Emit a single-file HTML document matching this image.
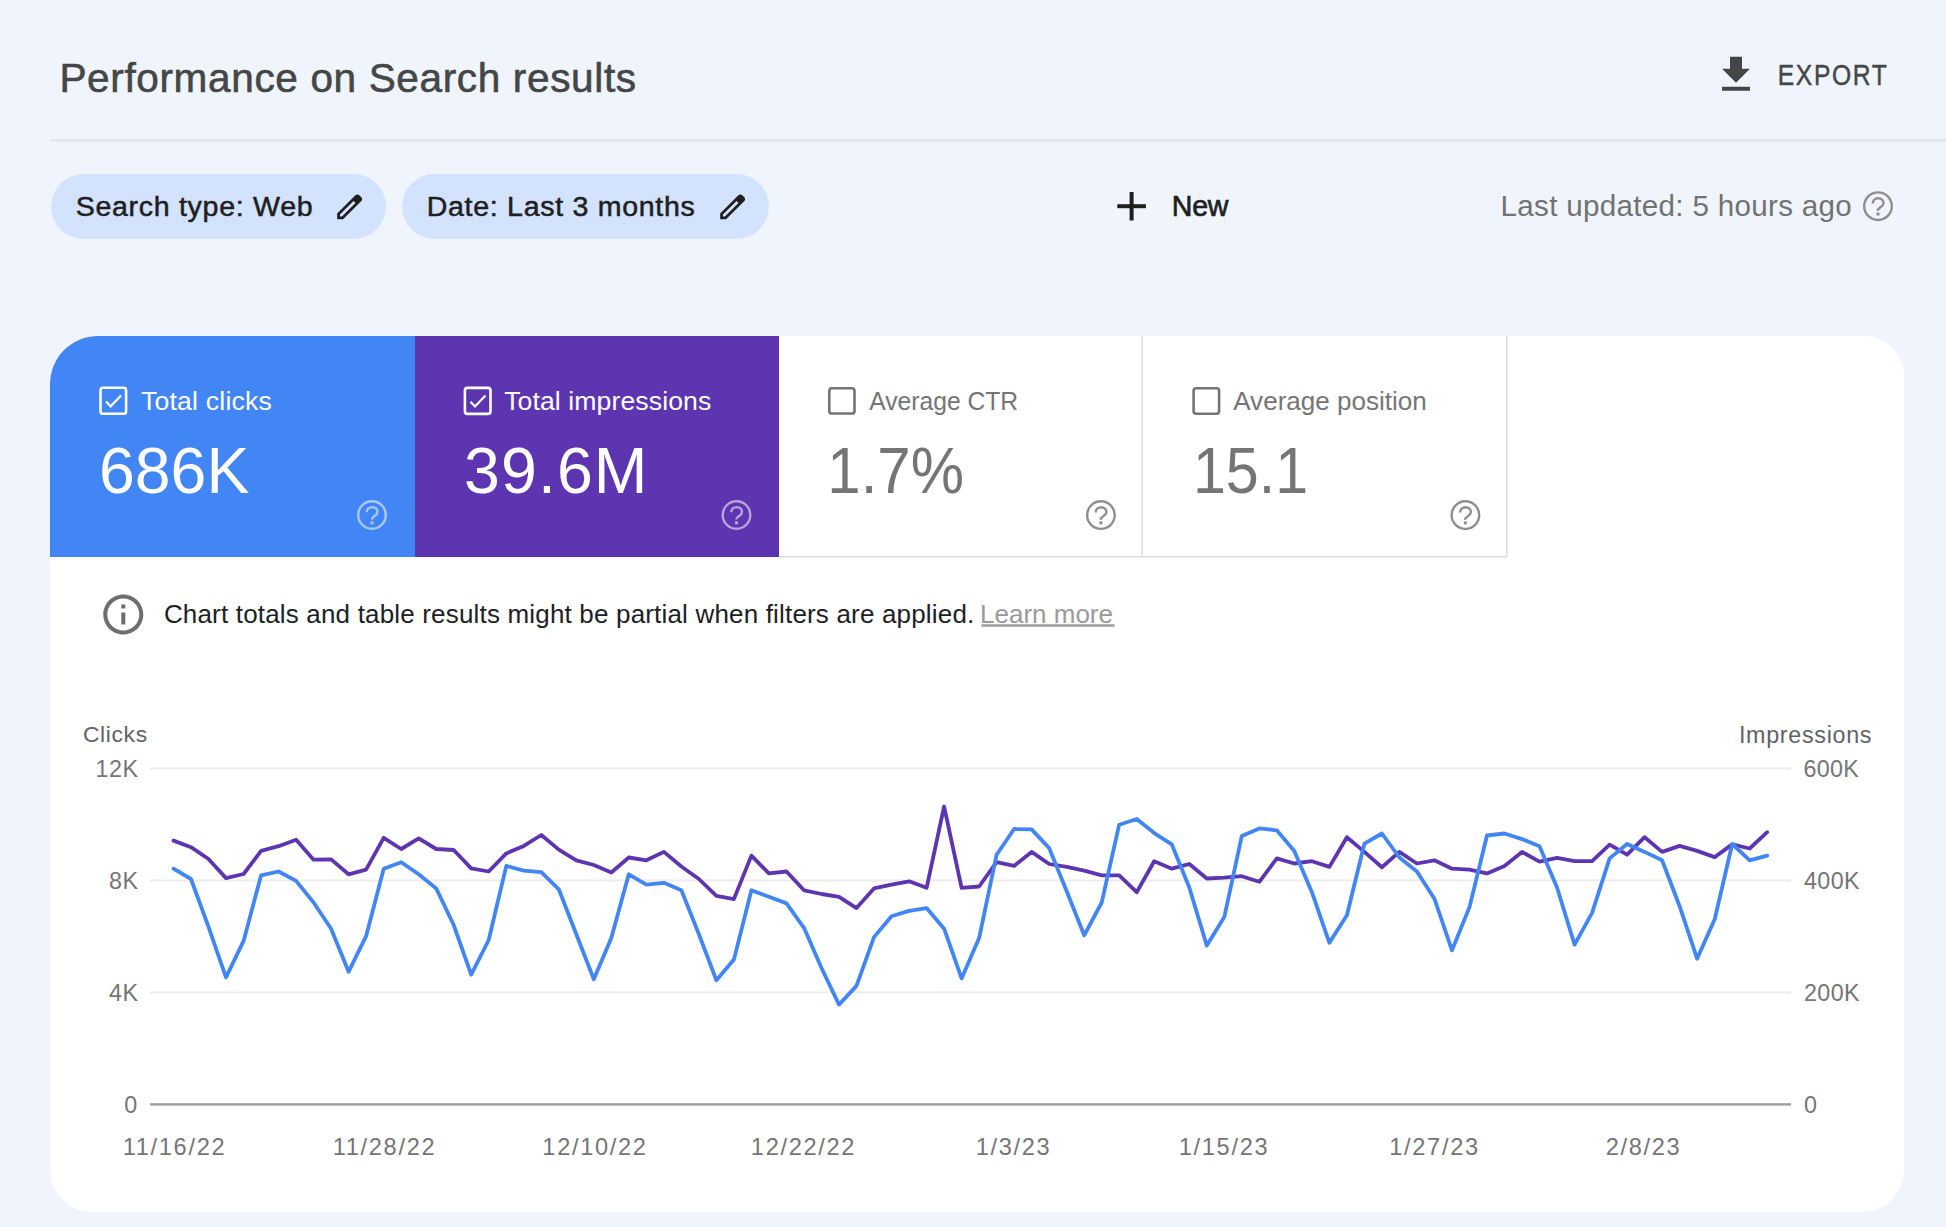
<!DOCTYPE html>
<html><head><meta charset="utf-8">
<style>
html,body{margin:0;padding:0;width:1946px;height:1227px;overflow:hidden;background:#f0f5fd;}
svg{display:block;position:absolute;left:0;top:0;}
text{font-family:"Liberation Sans",sans-serif;}
</style></head>
<body>
<svg width="1946" height="1227" viewBox="0 0 1946 1227">
  <!-- header -->
  <text x="59.4" y="92.4" font-size="40.6" letter-spacing="0.62" fill="#444746" stroke="#444746" stroke-width="0.6">Performance on Search results</text>
  <!-- export -->
  <g transform="translate(1712,50.7) scale(2)" fill="#444746"><path d="M19 9h-4V3H9v6H5l7 7 7-7zM5 18v2h14v-2H5z"/></g>
  <text transform="translate(1777.7,84.5) scale(0.85,1)" font-size="29" letter-spacing="1.95" fill="#444746" stroke="#444746" stroke-width="0.45">EXPORT</text>
  <rect x="50" y="139.5" width="1896" height="2" fill="#e1e2e3"/>

  <!-- chips -->
  <rect x="51" y="174" width="335" height="65" rx="32.5" fill="#d3e3fd"/>
  <text transform="translate(75.7,216) scale(1.07,1)" font-size="26.7" letter-spacing="0.65" fill="#1f1f1f" stroke="#1f1f1f" stroke-width="0.5">Search type: Web</text>
  <g transform="translate(333.0,223.5) scale(0.0347)" fill="#1f1f1f"><path d="M200-200h57l391-391-57-57-391 391v57Zm-80 80v-170l525-525q12-11 26.5-17t30.5-6q16 0 31 6t26 18l55 56q12 11 17.5 26t5.5 30q0 16-5.5 30.5T817-647L290-120H120Zm640-584-56-56 56 56Zm-141 85-28-29 57 57-29-28Z"/></g>

  <rect x="402" y="174" width="367" height="65" rx="32.5" fill="#d3e3fd"/>
  <text transform="translate(426.7,216) scale(1.07,1)" font-size="26.7" letter-spacing="0.65" fill="#1f1f1f" stroke="#1f1f1f" stroke-width="0.5">Date: Last 3 months</text>
  <g transform="translate(716.0,223.5) scale(0.0347)" fill="#1f1f1f"><path d="M200-200h57l391-391-57-57-391 391v57Zm-80 80v-170l525-525q12-11 26.5-17t30.5-6q16 0 31 6t26 18l55 56q12 11 17.5 26t5.5 30q0 16-5.5 30.5T817-647L290-120H120Zm640-584-56-56 56 56Zm-141 85-28-29 57 57-29-28Z"/></g>

  <!-- new -->
  <rect x="1117.3" y="204.2" width="28.6" height="4" fill="#1f1f1f"/>
  <rect x="1129.6" y="192" width="4" height="28.5" fill="#1f1f1f"/>
  <text x="1171.8" y="216.1" font-size="28.6" letter-spacing="-0.3" fill="#1f1f1f" stroke="#1f1f1f" stroke-width="0.7">New</text>

  <!-- last updated -->
  <text x="1500.5" y="216.4" font-size="29.6" letter-spacing="0.31" fill="#727272">Last updated: 5 hours ago</text>
  <g transform="translate(1878.0,206.2)" fill="none" stroke="#8e8e8e" stroke-width="2.4"><circle r="13.8"/><path d="M-5.2,-2.7 C-5.2,-6 -2.7,-7.9 0.2,-7.9 C3.2,-7.9 5.5,-5.8 5.5,-3 C5.5,0.8 -0.3,1.2 -0.3,4.6"/><rect x="-1.5" y="6.3" width="3" height="3" fill="#8e8e8e" stroke="none"/></g>

  <!-- card -->
  <path d="M50,384 a48,48 0 0 1 48,-48 L1864,336 a40,40 0 0 1 40,40 L1904,1170 a42,42 0 0 1 -42,42 L92,1212 a42,42 0 0 1 -42,-42 Z" fill="#ffffff"/>

  <!-- tiles -->
  <path d="M50,384 a48,48 0 0 1 48,-48 L415,336 L415,557 L50,557 Z" fill="#4285f4"/>
  <rect x="415" y="336" width="364" height="221" fill="#5e35b1"/>
  <rect x="779" y="556" width="728" height="1.5" fill="#dadce0"/>
  <rect x="1141.3" y="336" width="1.5" height="221" fill="#dadce0"/>
  <rect x="1506" y="336" width="1.5" height="221" fill="#dadce0"/>

  <!-- tile 1 -->
  <rect x="100.5" y="387.8" width="25.6" height="26" rx="2.6" fill="none" stroke="#fff" stroke-width="2.6"/>
  <polyline points="106.1,401.6 110.6,406.3 121.1,395.5" fill="none" stroke="#fff" stroke-width="2.2"/>
  <text x="140.9" y="409.6" font-size="26.6" letter-spacing="0.22" fill="#fff">Total clicks</text>
  <text x="99" y="493.2" font-size="64.4" fill="#fff">686K</text>
  <g transform="translate(372.0,515.0)" fill="none" stroke="rgba(255,255,255,0.55)" stroke-width="2.4"><circle r="13.8"/><path d="M-5.2,-2.7 C-5.2,-6 -2.7,-7.9 0.2,-7.9 C3.2,-7.9 5.5,-5.8 5.5,-3 C5.5,0.8 -0.3,1.2 -0.3,4.6"/><rect x="-1.5" y="6.3" width="3" height="3" fill="rgba(255,255,255,0.55)" stroke="none"/></g>

  <!-- tile 2 -->
  <rect x="464.9" y="387.9" width="25.6" height="26" rx="2.6" fill="none" stroke="#fff" stroke-width="2.6"/>
  <polyline points="470.5,401.7 475,406.4 485.5,395.6" fill="none" stroke="#fff" stroke-width="2.2"/>
  <text x="504.2" y="409.6" font-size="26.6" letter-spacing="0.1" fill="#fff">Total impressions</text>
  <text x="464.1" y="493.2" font-size="64.4" letter-spacing="1.1" fill="#fff">39.6M</text>
  <g transform="translate(736.5,515.0)" fill="none" stroke="rgba(255,255,255,0.55)" stroke-width="2.4"><circle r="13.8"/><path d="M-5.2,-2.7 C-5.2,-6 -2.7,-7.9 0.2,-7.9 C3.2,-7.9 5.5,-5.8 5.5,-3 C5.5,0.8 -0.3,1.2 -0.3,4.6"/><rect x="-1.5" y="6.3" width="3" height="3" fill="rgba(255,255,255,0.55)" stroke="none"/></g>

  <!-- tile 3 -->
  <rect x="829.3" y="388.3" width="25.2" height="25.2" rx="2.6" fill="none" stroke="#757575" stroke-width="2.6"/>
  <text transform="translate(869.2,409.6) scale(0.9275,1)" font-size="26.6" fill="#757575">Average CTR</text>
  <text transform="translate(827.3,493.2) scale(0.932,1)" font-size="64.4" fill="#757575">1.7%</text>
  <g transform="translate(1100.9,515.1)" fill="none" stroke="#8f8f8f" stroke-width="2.4"><circle r="13.8"/><path d="M-5.2,-2.7 C-5.2,-6 -2.7,-7.9 0.2,-7.9 C3.2,-7.9 5.5,-5.8 5.5,-3 C5.5,0.8 -0.3,1.2 -0.3,4.6"/><rect x="-1.5" y="6.3" width="3" height="3" fill="#8f8f8f" stroke="none"/></g>

  <!-- tile 4 -->
  <rect x="1193.6" y="388.3" width="25.5" height="25.4" rx="2.6" fill="none" stroke="#757575" stroke-width="2.6"/>
  <text transform="translate(1233.2,409.6) scale(0.98,1)" font-size="26.6" fill="#757575">Average position</text>
  <text transform="translate(1192.9,493.2) scale(0.92,1)" font-size="64.4" fill="#757575">15.1</text>
  <g transform="translate(1465.4,515.1)" fill="none" stroke="#8f8f8f" stroke-width="2.4"><circle r="13.8"/><path d="M-5.2,-2.7 C-5.2,-6 -2.7,-7.9 0.2,-7.9 C3.2,-7.9 5.5,-5.8 5.5,-3 C5.5,0.8 -0.3,1.2 -0.3,4.6"/><rect x="-1.5" y="6.3" width="3" height="3" fill="#8f8f8f" stroke="none"/></g>

  <!-- info -->
  <g transform="translate(99.3,590.4) scale(2)" fill="#6e6e6e"><path d="M11 7h2v2h-2zm0 4h2v6h-2zm1-9C6.48 2 2 6.48 2 12s4.48 10 10 10 10-4.48 10-10S17.52 2 12 2zm0 18c-4.41 0-8-3.59-8-8s3.59-8 8-8 8 3.59 8 8-3.59 8-8 8z"/></g>
  <text x="163.9" y="623" font-size="26" letter-spacing="0.175" fill="#202124">Chart totals and table results might be partial when filters are applied.</text>
  <text x="980" y="623" font-size="26" fill="#9a9a9a">Learn more</text>
  <rect x="981.5" y="624.2" width="133" height="2.6" fill="#a0a0a0"/>

  <!-- chart -->
  <text x="82.9" y="742.2" font-size="22.9" letter-spacing="0.64" fill="#5f6368">Clicks</text>
  <text x="1738.9" y="742.5" font-size="23.3" letter-spacing="0.7" fill="#5f6368">Impressions</text>
  <g fill="#eeeeee">
    <rect x="150" y="767.5" width="1641" height="2"/>
    <rect x="150" y="879.5" width="1641" height="2"/>
    <rect x="150" y="991.5" width="1641" height="2"/>
  </g>
  <rect x="150" y="1103.2" width="1641" height="2.4" fill="#9e9e9e"/>
  <g font-size="23.3" fill="#757575" text-anchor="end" letter-spacing="0.5">
    <text x="138.5" y="776.5">12K</text>
    <text x="138.5" y="889.2">8K</text>
    <text x="138.5" y="1001.2">4K</text>
    <text x="137.8" y="1113">0</text>
  </g>
  <g font-size="23.3" fill="#757575" letter-spacing="0.37">
    <text x="1803.4" y="776.5">600K</text>
    <text x="1804" y="889.2">400K</text>
    <text x="1804" y="1001.2">200K</text>
    <text x="1804" y="1113">0</text>
  </g>
  <g font-size="23.6" fill="#757575" text-anchor="middle" letter-spacing="1.68">
    <text x="174.5" y="1154.8">11/16/22</text>
    <text x="384.5" y="1154.8">11/28/22</text>
    <text x="595" y="1154.8">12/10/22</text>
    <text x="803.5" y="1154.8">12/22/22</text>
    <text x="1013.5" y="1154.8">1/3/23</text>
    <text x="1224" y="1154.8">1/15/23</text>
    <text x="1434.5" y="1154.8">1/27/23</text>
    <text x="1643.5" y="1154.8">2/8/23</text>
  </g>
  <polyline points="173.5,840.6 191.0,847.2 208.5,859.0 226.0,878.1 243.6,874.0 261.1,850.9 278.6,846.2 296.1,839.7 313.6,859.7 331.1,859.4 348.6,874.3 366.1,869.7 383.7,837.8 401.2,849.0 418.7,838.4 436.2,849.0 453.7,850.0 471.2,868.4 488.7,871.5 506.3,853.4 523.8,845.9 541.3,835.0 558.8,849.6 576.3,860.3 593.8,865.0 611.3,872.5 628.8,857.5 646.4,860.3 663.9,851.9 681.4,866.5 698.9,879.0 716.4,895.9 733.9,899.1 751.4,855.6 768.9,873.4 786.5,871.5 804.0,890.3 821.5,894.0 839.0,896.8 856.5,908.1 874.0,888.4 891.5,884.7 909.1,881.3 926.6,887.8 944.1,806.5 961.6,887.8 979.1,886.5 996.6,862.2 1014.1,865.9 1031.6,851.9 1049.2,864.0 1066.7,866.9 1084.2,870.6 1101.7,875.3 1119.2,875.3 1136.7,892.2 1154.2,861.2 1171.8,868.7 1189.3,864.0 1206.8,878.5 1224.3,877.7 1241.8,876.2 1259.3,881.8 1276.8,858.4 1294.3,863.5 1311.9,861.2 1329.4,866.9 1346.9,837.2 1364.4,851.9 1381.9,867.2 1399.4,851.9 1416.9,863.5 1434.4,860.3 1452.0,868.7 1469.5,869.7 1487.0,873.4 1504.5,865.9 1522.0,851.9 1539.5,861.6 1557.0,857.9 1574.6,861.2 1592.1,861.2 1609.6,844.7 1627.1,854.7 1644.6,837.2 1662.1,851.9 1679.6,845.9 1697.1,850.9 1714.7,857.1 1732.2,844.4 1749.7,848.5 1767.2,832.2" fill="none" stroke="#5e35b1" stroke-width="3.8" stroke-linejoin="round" stroke-linecap="round"/>
  <polyline points="173.5,868.7 191.0,879.0 208.5,926.8 226.0,977.4 243.6,940.9 261.1,875.3 278.6,871.5 296.1,880.9 313.6,902.5 331.1,928.7 348.6,971.8 366.1,936.2 383.7,868.7 401.2,862.2 418.7,874.3 436.2,888.4 453.7,925.0 471.2,974.6 488.7,940.0 506.3,865.9 523.8,870.6 541.3,872.1 558.8,889.3 576.3,934.3 593.8,979.3 611.3,938.0 628.8,874.3 646.4,884.7 663.9,882.8 681.4,890.3 698.9,934.3 716.4,980.2 733.9,959.6 751.4,890.3 768.9,896.8 786.5,903.4 804.0,927.8 821.5,968.0 839.0,1004.6 856.5,985.9 874.0,937.1 891.5,916.3 909.1,910.9 926.6,908.1 944.1,928.7 961.6,978.4 979.1,938.1 996.6,854.7 1014.1,829.0 1031.6,829.4 1049.2,848.1 1066.7,891.2 1084.2,935.3 1101.7,902.5 1119.2,824.7 1136.7,819.0 1154.2,833.1 1171.8,844.4 1189.3,887.5 1206.8,945.6 1224.3,917.1 1241.8,835.9 1259.3,828.4 1276.8,830.3 1294.3,850.9 1311.9,892.2 1329.4,942.8 1346.9,915.2 1364.4,843.7 1381.9,833.5 1399.4,857.5 1416.9,871.5 1434.4,898.7 1452.0,950.3 1469.5,907.1 1487.0,835.5 1504.5,833.5 1522.0,839.1 1539.5,846.2 1557.0,887.5 1574.6,944.6 1592.1,912.8 1609.6,858.4 1627.1,844.0 1644.6,851.9 1662.1,860.3 1679.6,906.2 1697.1,958.7 1714.7,919.3 1732.2,844.0 1749.7,860.3 1767.2,855.6" fill="none" stroke="#4285f4" stroke-width="3.8" stroke-linejoin="round" stroke-linecap="round"/>
</svg>
</body></html>
